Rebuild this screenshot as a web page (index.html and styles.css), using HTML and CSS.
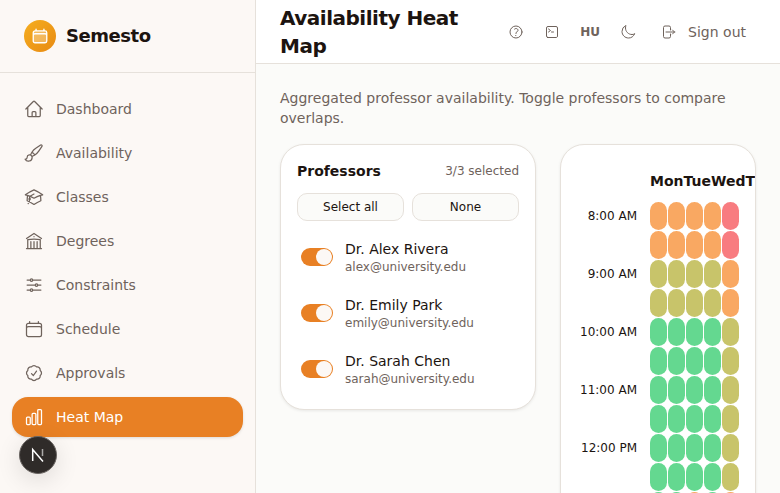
FILE: index.html
```html
<!DOCTYPE html>
<html lang="en">
<head>
<meta charset="utf-8">
<title>Availability Heat Map</title>
<link rel="stylesheet" href="styles.css">
</head>
<body>
<div class="app">
  <aside class="sidebar">
    <div class="brand">
      <span class="logo">
        <svg class="logo-ico" viewBox="0 0 24 24"><path class="logo-fill" d="M3 18.75V7.5a2.25 2.25 0 0 1 2.25-2.25h13.5A2.25 2.25 0 0 1 21 7.5v11.25A2.25 2.25 0 0 1 18.75 21H5.25A2.25 2.25 0 0 1 3 18.75Z"/><path d="M6.75 3v2.25M17.25 3v2.25M3 18.75V7.5a2.25 2.25 0 0 1 2.25-2.25h13.5A2.25 2.25 0 0 1 21 7.5v11.25m-18 0A2.25 2.25 0 0 0 5.25 21h13.5A2.25 2.25 0 0 0 21 18.75m-18 0v-7.5A2.25 2.25 0 0 1 5.25 9h13.5A2.25 2.25 0 0 1 21 11.25v7.5"/></svg>
      </span>
      <span class="brand-name">Semesto</span>
    </div>
    <nav class="nav">
      <a class="nav-item"><svg class="ico" viewBox="0 0 24 24"><path d="m2.25 12 8.954-8.955c.44-.439 1.152-.439 1.591 0L21.75 12M4.5 9.75v10.125c0 .621.504 1.125 1.125 1.125H9.75v-4.875c0-.621.504-1.125 1.125-1.125h2.25c.621 0 1.125.504 1.125 1.125V21h4.125c.621 0 1.125-.504 1.125-1.125V9.75M8.25 21h8.25"/></svg>Dashboard</a>
      <a class="nav-item"><svg class="ico" viewBox="0 0 24 24"><path d="M9.53 16.122a3 3 0 0 0-5.78 1.128 2.25 2.25 0 0 1-2.4 2.245 4.5 4.5 0 0 0 8.4-2.245c0-.399-.078-.78-.22-1.128Zm0 0a15.998 15.998 0 0 0 3.388-1.62m-5.043-.025a15.994 15.994 0 0 1 1.622-3.395m3.42 3.42a15.995 15.995 0 0 0 4.764-4.648l3.876-5.814a1.151 1.151 0 0 0-1.597-1.597L14.146 6.32a15.996 15.996 0 0 0-4.649 4.763m3.42 3.42a6.776 6.776 0 0 0-3.42-3.42"/></svg>Availability</a>
      <a class="nav-item"><svg class="ico" viewBox="0 0 24 24"><path d="M4.26 10.147a60.438 60.438 0 0 0-.491 6.347A48.62 48.62 0 0 1 12 20.904a48.62 48.62 0 0 1 8.232-4.41 60.46 60.46 0 0 0-.491-6.347m-15.482 0a50.636 50.636 0 0 0-2.658-.813A59.906 59.906 0 0 1 12 3.493a59.903 59.903 0 0 1 10.399 5.84c-.896.248-1.783.52-2.658.814m-15.482 0A50.717 50.717 0 0 1 12 13.489a50.702 50.702 0 0 1 7.74-3.342M6.75 15a.75.75 0 1 0 0-1.5.75.75 0 0 0 0 1.5Zm0 0v-3.675A55.378 55.378 0 0 1 12 8.443m-7.007 11.55A5.981 5.981 0 0 0 6.75 15.75v-1.5"/></svg>Classes</a>
      <a class="nav-item"><svg class="ico" viewBox="0 0 24 24"><path d="M12 21v-8.25M15.75 21v-8.25M8.25 21v-8.25M3 9l9-6 9 6m-1.5 12V10.332A48.36 48.36 0 0 0 12 9.75c-2.551 0-5.056.2-7.5.582V21M3 21h18M12 6.75h.008v.008H12V6.75Z"/></svg>Degrees</a>
      <a class="nav-item"><svg class="ico" viewBox="0 0 24 24"><path d="M10.5 6h9.75M10.5 6a1.5 1.5 0 1 1-3 0m3 0a1.5 1.5 0 1 0-3 0M3.75 6H7.5m3 12h9.75m-9.75 0a1.5 1.5 0 0 1-3 0m3 0a1.5 1.5 0 0 0-3 0m-3.75 0H7.5m9-6h3.75m-3.75 0a1.5 1.5 0 0 1-3 0m3 0a1.5 1.5 0 0 0-3 0m-9.75 0h9.75"/></svg>Constraints</a>
      <a class="nav-item"><svg class="ico" viewBox="0 0 24 24"><path d="M6.75 3v2.25M17.25 3v2.25M3 18.75V7.5a2.25 2.25 0 0 1 2.25-2.25h13.5A2.25 2.25 0 0 1 21 7.5v11.25m-18 0A2.25 2.25 0 0 0 5.25 21h13.5A2.25 2.25 0 0 0 21 18.75m-18 0v-7.5A2.25 2.25 0 0 1 5.25 9h13.5A2.25 2.25 0 0 1 21 11.25v7.5"/></svg>Schedule</a>
      <a class="nav-item"><svg class="ico" viewBox="0 0 24 24"><path d="M9 12.75 11.25 15 15 9.75M21 12c0 1.268-.63 2.39-1.593 3.068a3.745 3.745 0 0 1-1.043 3.296 3.745 3.745 0 0 1-3.296 1.043A3.745 3.745 0 0 1 12 21c-1.268 0-2.39-.63-3.068-1.593a3.746 3.746 0 0 1-3.296-1.043 3.746 3.746 0 0 1-1.043-3.296A3.745 3.745 0 0 1 3 12c0-1.268.63-2.39 1.593-3.068a3.745 3.745 0 0 1 1.043-3.296 3.746 3.746 0 0 1 3.296-1.043A3.746 3.746 0 0 1 12 3c1.268 0 2.39.63 3.068 1.593a3.746 3.746 0 0 1 3.296 1.043 3.746 3.746 0 0 1 1.043 3.296A3.745 3.745 0 0 1 21 12Z"/></svg>Approvals</a>
      <a class="nav-item active"><svg class="ico" viewBox="0 0 24 24"><path d="M3 13.125C3 12.504 3.504 12 4.125 12h2.25c.621 0 1.125.504 1.125 1.125v6.75C7.5 20.496 6.996 21 6.375 21h-2.25A1.125 1.125 0 0 1 3 19.875v-6.75ZM9.75 8.625c0-.621.504-1.125 1.125-1.125h2.25c.621 0 1.125.504 1.125 1.125v11.25c0 .621-.504 1.125-1.125 1.125h-2.25a1.125 1.125 0 0 1-1.125-1.125V8.625ZM16.5 4.125c0-.621.504-1.125 1.125-1.125h2.25C20.496 3 21 3.504 21 4.125v15.75c0 .621-.504 1.125-1.125 1.125h-2.25a1.125 1.125 0 0 1-1.125-1.125V4.125Z"/></svg>Heat Map</a>
    </nav>
    <div class="next-badge"><svg class="next-mark" viewBox="0 0 18 18"><path class="next-stroke" d="M3.7 15V3.5L14 15.5"/><path class="next-stroke-fade" d="M13.5 3v7"/></svg></div>
  </aside>
  <div class="content">
    <header class="topbar">
      <h1 class="title">Availability Heat Map</h1>
      <div class="actions">
        <svg class="act" viewBox="0 0 24 24"><path d="M9.879 7.519c1.171-1.025 3.071-1.025 4.242 0 1.172 1.025 1.172 2.687 0 3.712-.203.179-.43.326-.67.442-.745.361-1.45.999-1.45 1.827v.75M21 12a9 9 0 1 1-18 0 9 9 0 0 1 18 0Zm-9 5.25h.008v.008H12v-.008Z"/></svg>
        <svg class="act" viewBox="0 0 24 24"><path d="m6.75 7.5 3 2.25-3 2.25m4.5 0h3m-9 8.25h13.5A2.25 2.25 0 0 0 20.25 18V6A2.25 2.25 0 0 0 18 3.75H6A2.25 2.25 0 0 0 3.75 6v12a2.25 2.25 0 0 0 2.25 2.25Z"/></svg>
        <span class="lang">HU</span>
        <svg class="act moon" viewBox="0 0 24 24"><path d="M21.752 15.002A9.72 9.72 0 0 1 18 15.75c-5.385 0-9.75-4.365-9.75-9.75 0-1.33.266-2.597.748-3.752A9.753 9.753 0 0 0 3 11.25C3 16.635 7.365 21 12.75 21a9.753 9.753 0 0 0 9.002-5.998Z"/></svg>
        <span class="signout"><svg class="act" viewBox="0 0 24 24"><path d="M15.75 9V5.25A2.25 2.25 0 0 0 13.5 3h-6a2.25 2.25 0 0 0-2.25 2.25v13.5A2.25 2.25 0 0 0 7.5 21h6a2.25 2.25 0 0 0 2.25-2.25V15m3 0 3-3m0 0-3-3m3 3H9"/></svg>Sign out</span>
      </div>
    </header>
    <main class="main">
      <p class="lead">Aggregated professor availability. Toggle professors to compare overlaps.</p>
      <div class="columns">
        <section class="card prof">
          <div class="prof-head"><span class="prof-title">Professors</span><span class="prof-count">3/3 selected</span></div>
          <div class="prof-btns"><button class="btn">Select all</button><button class="btn">None</button></div>
          <ul class="prof-list">
            <li class="prof-row"><span class="toggle"><span class="knob"></span></span><span class="prof-info"><span class="prof-name">Dr. Alex Rivera</span><span class="prof-mail">alex@university.edu</span></span></li>
            <li class="prof-row"><span class="toggle"><span class="knob"></span></span><span class="prof-info"><span class="prof-name">Dr. Emily Park</span><span class="prof-mail">emily@university.edu</span></span></li>
            <li class="prof-row"><span class="toggle"><span class="knob"></span></span><span class="prof-info"><span class="prof-name">Dr. Sarah Chen</span><span class="prof-mail">sarah@university.edu</span></span></li>
          </ul>
        </section>
        <section class="card heat">
          <div class="days"><span>Mon</span><span>Tue</span><span>Wed</span><span>Thu</span><span>Fri</span></div>
          <div class="grid">
            <span class="time">8:00 AM</span><i class="c o"></i><i class="c o"></i><i class="c o"></i><i class="c o"></i><i class="c r"></i>
            <span class="time"></span><i class="c o"></i><i class="c o"></i><i class="c o"></i><i class="c o"></i><i class="c r"></i>
            <span class="time">9:00 AM</span><i class="c y"></i><i class="c y"></i><i class="c y"></i><i class="c y"></i><i class="c o"></i>
            <span class="time"></span><i class="c y"></i><i class="c y"></i><i class="c y"></i><i class="c y"></i><i class="c o"></i>
            <span class="time">10:00 AM</span><i class="c g"></i><i class="c g"></i><i class="c g"></i><i class="c g"></i><i class="c y"></i>
            <span class="time"></span><i class="c g"></i><i class="c g"></i><i class="c g"></i><i class="c g"></i><i class="c y"></i>
            <span class="time">11:00 AM</span><i class="c g"></i><i class="c g"></i><i class="c g"></i><i class="c g"></i><i class="c y"></i>
            <span class="time"></span><i class="c g"></i><i class="c g"></i><i class="c g"></i><i class="c g"></i><i class="c y"></i>
            <span class="time">12:00 PM</span><i class="c g"></i><i class="c g"></i><i class="c g"></i><i class="c g"></i><i class="c y"></i>
            <span class="time"></span><i class="c g"></i><i class="c g"></i><i class="c g"></i><i class="c g"></i><i class="c y"></i>
            <span class="time"></span><i class="c g"></i><i class="c g"></i><i class="c o"></i><i class="c g"></i><i class="c o"></i>
          </div>
        </section>
      </div>
    </main>
  </div>
</div>
</body>
</html>
```
FILE: styles.css
```css
* { box-sizing: border-box; }
html, body { margin: 0; height: 100%; overflow: hidden; }
body { font-family: "DejaVu Sans", sans-serif; color: #1c1410; background: #fbfbf9; }
.app { display: flex; height: 493px; overflow: hidden; }
.sidebar { position: relative; flex: 0 0 256px; background: #fcf8f5; border-right: 1px solid #e6e1db; }
.brand { height: 73px; display: flex; align-items: center; gap: 10px; padding: 0 24px; border-bottom: 1px solid #e6e1db; }
.logo { width: 32px; height: 32px; border-radius: 50%; background: linear-gradient(135deg, #f5ae20, #e88a12); display: flex; align-items: center; justify-content: center; }
.logo-ico { width: 18px; height: 18px; fill: none; stroke: #fff; stroke-width: 1.8; stroke-linecap: round; stroke-linejoin: round; }
.logo-fill { fill: rgba(255,255,255,.3); stroke: none; }
.brand-name { font-size: 18px; line-height: 28px; font-weight: 700; letter-spacing: -0.025em; }
.nav { display: flex; flex-direction: column; gap: 4px; padding: 16px 12px; }
.nav-item { height: 40px; display: flex; align-items: center; gap: 12px; padding: 0 12px; border-radius: 16px; font-size: 14px; color: #6f635c; }
.nav-item.active { background: #e88024; color: #fff; box-shadow: 0 1px 3px rgba(0,0,0,.12); }
.ico { width: 20px; height: 20px; flex: none; fill: none; stroke: currentColor; stroke-width: 1.5; stroke-linecap: round; stroke-linejoin: round; }
.next-badge { position: absolute; left: 19px; top: 436px; width: 38px; height: 38px; border-radius: 50%; background: #2f2b29; border: 1px solid #6a6562; box-shadow: 0 6px 24px rgba(0,0,0,.12); display: flex; align-items: center; justify-content: center; }
.next-mark { width: 18px; height: 18px; fill: none; stroke: #fff; stroke-width: 1.5; }
.next-stroke-fade { opacity: .6; }
.content { flex: 1; min-width: 0; display: flex; flex-direction: column; }
.topbar { height: 64px; flex: none; background: #fff; border-bottom: 1px solid #e6e1db; display: flex; align-items: center; justify-content: space-between; padding: 0 34px 0 24px; }
.title { margin: 0; width: 210px; font-size: 20px; line-height: 28px; font-weight: 700; letter-spacing: -0.025em; }
.actions { display: flex; align-items: center; gap: 20px; color: #6f635c; font-size: 14px; }
.act { width: 16px; height: 16px; fill: none; stroke: currentColor; stroke-width: 1.5; stroke-linecap: round; stroke-linejoin: round; flex: none; }
.moon { margin-right: 4px; }
.lang { font-size: 12px; font-weight: 700; }
.signout { display: flex; align-items: center; gap: 12px; }
.main { padding: 24px 24px 0; flex: 1; min-height: 0; }
.lead { margin: 0 0 16px; font-size: 14px; line-height: 20px; color: #6f635c; }
.columns { display: flex; align-items: flex-start; gap: 24px; }
.card { background: #fff; border: 1px solid #e6e1db; border-radius: 24px; box-shadow: 0 1px 3px rgba(0,0,0,.08); }
.prof { flex: 0 0 256px; padding: 16px 16px 12px; }
.prof-head { display: flex; justify-content: space-between; align-items: center; height: 20px; }
.prof-title { font-size: 14px; font-weight: 700; }
.prof-count { font-size: 12px; color: #6f635c; }
.prof-btns { display: flex; gap: 8px; margin-top: 12px; }
.btn { flex: 1; height: 28px; font: 12px "DejaVu Sans", sans-serif; color: #1c1410; background: #fbfbf9; border: 1px solid #e6e1db; border-radius: 10px; padding: 0; }
.prof-list { list-style: none; margin: 8px 0 0; padding: 0; }
.prof-row { display: flex; align-items: center; gap: 12px; height: 56px; padding: 0 4px; }
.toggle { width: 32px; height: 18px; border-radius: 9px; background: #e88024; display: flex; align-items: center; justify-content: flex-end; padding-right: 1px; flex: none; }
.knob { width: 16px; height: 16px; border-radius: 50%; background: #fcf8f5; }
.prof-info { display: flex; flex-direction: column; }
.prof-name { font-size: 14px; line-height: 20px; }
.prof-mail { font-size: 12px; line-height: 16px; color: #6f635c; }
.heat { flex: 0 0 196px; height: 400px; overflow: hidden; padding: 24px 0 0 16px; }
.days { display: flex; margin-left: 73px; font-size: 14px; font-weight: 700; line-height: 24px; white-space: nowrap; height: 24px; }
.grid { margin-top: 9px; display: grid; grid-template-columns: 72px repeat(5, 17px); column-gap: 1px; row-gap: 1px; grid-auto-rows: 28px; }
.time { font-size: 12px; line-height: 28px; text-align: right; margin-right: 12px; white-space: nowrap; }
.c { display: block; border-radius: 9px; }
.o { background: #f9a862; }
.r { background: #f87c80; }
.y { background: #c8c46a; }
.g { background: #64d890; }
```
